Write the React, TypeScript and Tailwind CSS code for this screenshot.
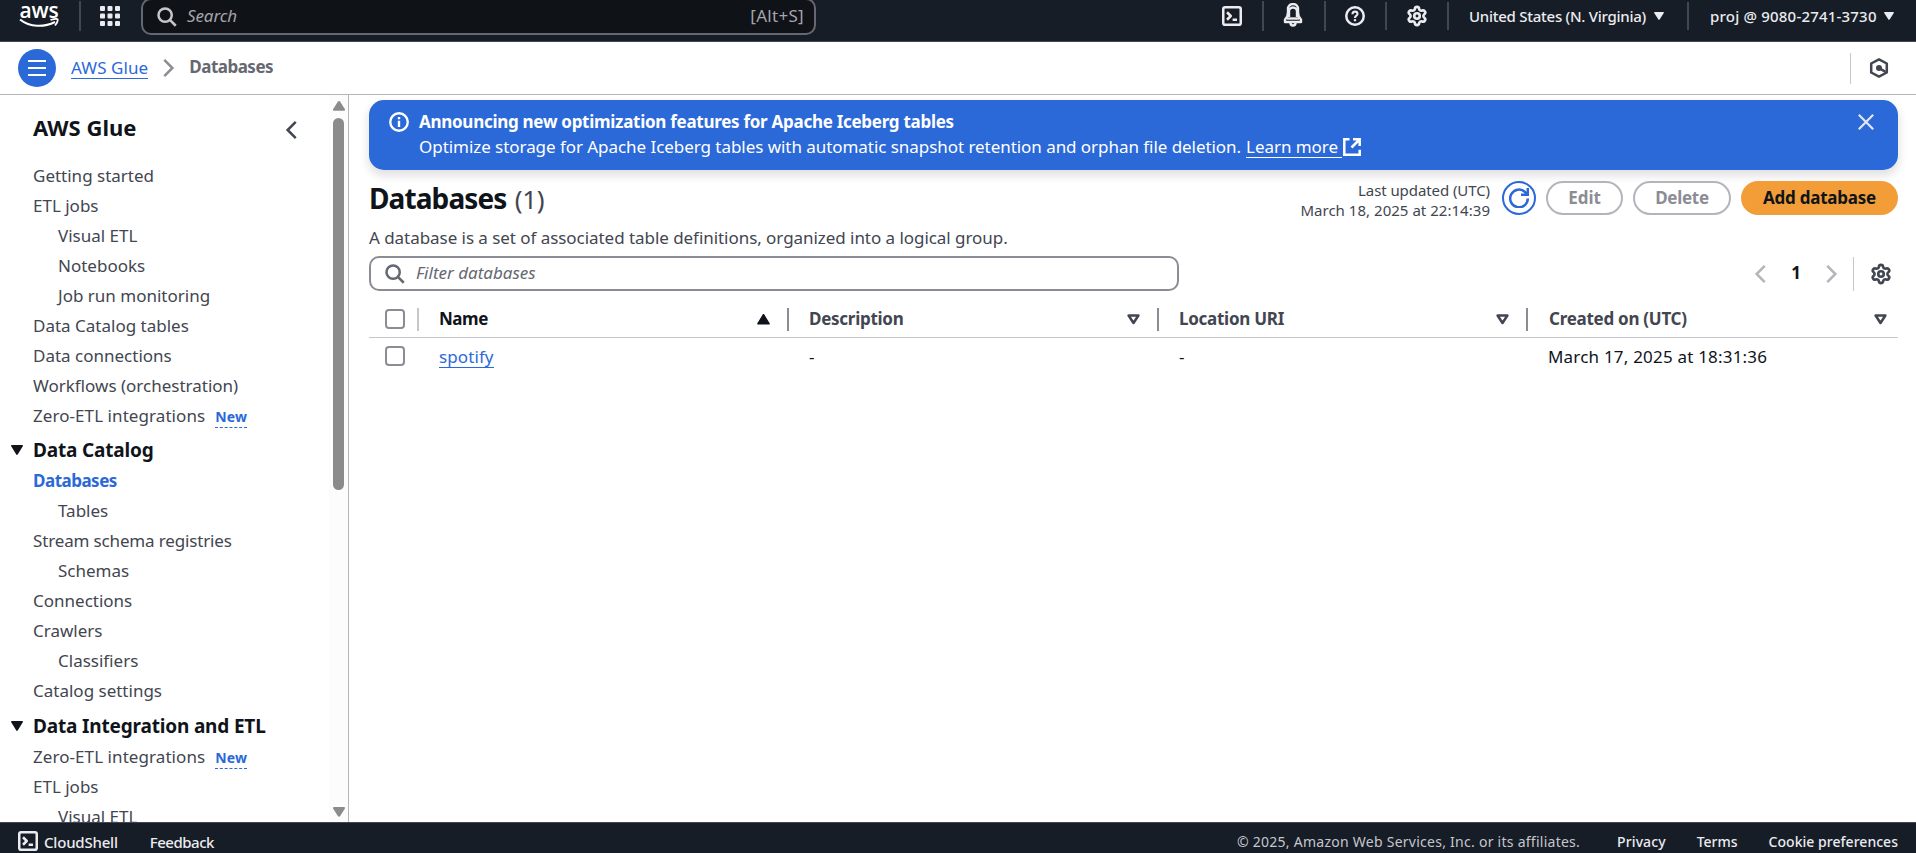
import type { ReactNode } from "react";
import { Settings } from "lucide-react";
import { clsx } from "clsx";

type NavItem = { label: string; nested?: boolean; active?: boolean; isNew?: boolean; tight?: boolean };

const topLinks: NavItem[] = [
  { label: "Getting started" },
  { label: "ETL jobs" },
  { label: "Visual ETL", nested: true },
  { label: "Notebooks", nested: true },
  { label: "Job run monitoring", nested: true },
  { label: "Data Catalog tables" },
  { label: "Data connections" },
  { label: "Workflows (orchestration)" },
  { label: "Zero-ETL integrations", isNew: true },
];

const catalogLinks: NavItem[] = [
  { label: "Databases", active: true },
  { label: "Tables", nested: true },
  { label: "Stream schema registries", tight: true },
  { label: "Schemas", nested: true },
  { label: "Connections" },
  { label: "Crawlers" },
  { label: "Classifiers", nested: true },
  { label: "Catalog settings" },
];

const integrationLinks: NavItem[] = [
  { label: "Zero-ETL integrations", isNew: true },
  { label: "ETL jobs" },
  { label: "Visual ETL", nested: true },
];

type IconProps = { className?: string; children: ReactNode };

function Icon({ className, children }: IconProps) {
  return (
    <svg
      viewBox="0 0 16 16"
      fill="none"
      stroke="currentColor"
      strokeWidth="2"
      strokeLinejoin="round"
      className={clsx("shrink-0", className)}
    >
      {children}
    </svg>
  );
}

function SearchIcon({ className }: { className: string }) {
  return (
    <Icon className={className}>
      <circle cx="6.500" cy="6.500" r="5.300" />
      <path d="m15 15-4.700-4.700" />
    </Icon>
  );
}

function CloudShellIcon() {
  return (
    <Icon className="size-5">
      <rect x="1" y="1" width="14" height="14" rx="1.5" />
      <path d="m4 5 3 3-3 3" />
      <path d="M8.5 11H12" />
    </Icon>
  );
}

function BellIcon() {
  return (
    <svg viewBox="0 0 20 24" fill="none" stroke="currentColor" strokeWidth="2.400" strokeLinejoin="round" className="h-6 w-5">
      <path d="M5 10V6a5 5 0 0 1 10 0v4" />
      <path d="M6 14V8.5a4 4 0 0 1 8 0V14" />
      <path d="M5 9.5C5 13 4 14.5 2 16.5V19h16v-2.500C16 14.500 15 13 15 9.500" />
      <path d="M4 15.500h12" />
      <path d="M7.500 19v1a2.500 2.500 0 0 0 5 0v-1" />
    </svg>
  );
}

function Caret() {
  return (
    <svg viewBox="0 0 10 8" className="h-2 w-2.5 shrink-0" fill="currentColor">
      <path d="M0.800 0h8.400c.6 0 .9.600.6 1L5.600 7.500c-.3.500-.9.500-1.200 0L.2 1C-.1.600.2 0 .800 0Z" />
    </svg>
  );
}

function NavLink({ item }: { item: NavItem }) {
  return (
    <li
      className={clsx(
        "flex h-[30px] shrink-0 items-center whitespace-nowrap",
        item.nested ? "pl-[58px]" : "pl-[33px]",
        item.active ? "font-bold tracking-[-0.5px] text-[#2b69d8]" : "text-[#424650]",
        item.tight && "tracking-[-0.15px]",
        item.isNew && "tracking-[0.07px]"
      )}
    >
      {item.label}
      {item.isNew && (
        <span className="mt-[3px] ml-2.5 border-b border-dashed border-[#2b69d8] text-sm leading-5 font-bold tracking-[0.2px] text-[#2b69d8]">
          New
        </span>
      )}
    </li>
  );
}

function NavHeading({ children }: { children: ReactNode }) {
  return (
    <h3 className="flex h-[30px] items-center gap-2.5 pl-[11px] text-[19px] font-bold tracking-[-0.17px] whitespace-nowrap text-[#0f141a]">
      <svg viewBox="0 0 12 10" className="h-2.5 w-3" fill="currentColor">
        <path d="M.8 0h10.400c.7 0 1 .6.6 1.200L6.700 9.500c-.3.600-1.100.600-1.400 0L.2 1.200C-.2.600.1 0 .8 0Z" />
      </svg>
      {children}
    </h3>
  );
}

function Sidebar() {
  return (
    <aside className="flex w-[349px] shrink-0 border-r border-[#b4b4bb]">
      <nav className="flex min-w-0 flex-1 flex-col overflow-hidden">
        <div className="flex h-[66px] shrink-0 items-center justify-between pr-[27px] pl-[33px]">
          <h2 className="-mt-0.5 text-[22px] font-bold text-[#0f141a]">AWS Glue</h2>
          <Icon className="mt-1 size-5 text-[#424650]">
            <path d="M11 1.500 4.500 8l6.500 6.500" strokeLinejoin="miter" />
          </Icon>
        </div>
        <ul>{topLinks.map((item) => <NavLink key={item.label} item={item} />)}</ul>
        <div className="mt-1">
          <NavHeading>Data Catalog</NavHeading>
          <ul className="mt-px">{catalogLinks.map((item) => <NavLink key={item.label} item={item} />)}</ul>
        </div>
        <div className="mt-[5px]">
          <NavHeading>Data Integration and ETL</NavHeading>
          <ul className="mt-px">{integrationLinks.map((item) => <NavLink key={item.label} item={item} />)}</ul>
        </div>
      </nav>
      <div className="flex w-[19px] flex-col items-center bg-[#fcfcfc] pt-[6px] pb-[5px]">
        <svg viewBox="0 0 12 10" className="h-2.5 w-3" fill="#8b8b8b">
          <path d="M6 0c.5 0 .8.200 1 .5L11.800 8c.4.700.1 1.800-1 1.800H1.200C.1 9.800-.2 8.700.2 8L5 .5C5.200.200 5.500 0 6 0Z" />
        </svg>
        <div className="mt-[7px] h-[372px] w-[11px] rounded-full bg-[#8b8b8b]" />
        <svg viewBox="0 0 12 10" className="mt-auto h-2.5 w-3" fill="#8b8b8b">
          <path d="M6 9.800c.5 0 .8-.2 1-.5L11.800 1.800C12.200 1.100 11.900 0 10.800 0H1.200C.1 0-.2 1.100.2 1.800L5 9.300c.2.300.5.500 1 .5Z" />
        </svg>
      </div>
    </aside>
  );
}

function Divider({ className }: { className: string }) {
  return <div className={clsx("w-0.5 shrink-0 bg-[#424650]", className)} />;
}

function TopBar() {
  return (
    <header className="flex h-[42px] shrink-0 items-start overflow-hidden border-b border-[#424650] bg-[#161d26] text-[15px] text-[#ebebf0]">
      <div className="flex w-20 flex-col items-center">
        <div className="h-[18px] pr-0.5 font-['Open_Sans'] text-[21px] leading-[20px] font-semibold tracking-[-0.1px] text-white">
          aws
        </div>
        <svg viewBox="0 0 40 11" className="mr-[2px] h-[11px] w-10" fill="none" stroke="#fff" strokeWidth="2">
          <path d="M1 1.500C11 9.500 25 9.500 36 4" />
          <path d="M31.500 2C35 .800 37.500.600 38.500 1.200 39 2.400 37.800 5.500 36 7.500" strokeWidth="1.800" />
        </svg>
      </div>
      <Divider className="mt-px -ml-px h-[30px]" />
      <svg viewBox="0 0 20 20" className="mt-1.5 ml-[19px] size-5" fill="currentColor">
        {[0, 7.500, 15].map((y) => [0, 7.500, 15].map((x) => <rect key={`${x}-${y}`} x={x} y={y} width="5" height="5" rx="1" />))}
      </svg>
      <div className="-mt-0.5 ml-[21px] flex h-[37px] w-[675px] items-center rounded-[10px] border-2 border-[#656871] bg-[#0f1217] pr-2.5 pl-3.5 text-[17px]">
        <SearchIcon className="size-5 text-[#c6c6cd]" />
        <span className="-mt-0.5 ml-2.5 tracking-[-0.1px] text-[#a4a4ad] italic">Search</span>
        <span className="-mt-0.5 ml-auto tracking-[0.3px] text-[#a4a4ad]">[Alt+S]</span>
      </div>
      <div className="mt-1.5 ml-[406px]">
        <CloudShellIcon />
      </div>
      <Divider className="mt-px ml-5 h-[30px]" />
      <div className="mt-[3px] ml-[19px]">
        <BellIcon />
      </div>
      <Divider className="mt-px ml-[21px] h-[30px]" />
      <Icon className="mt-1.5 ml-[19px] size-5">
        <circle cx="8" cy="8" r="7" />
        <path d="M6 6.500c0-1.100.9-2 2-2s2 .8 2 1.900c0 1.500-2 1.300-2 3.100" strokeWidth="1.700" />
        <path d="M8 10.500v1.700" strokeWidth="1.800" />
      </Icon>
      <Divider className="mt-0.5 ml-5 h-7" />
      <Settings className="mt-[5px] ml-[19px] size-[22px]" strokeWidth={2.900} />
      <Divider className="mt-0.5 ml-[19px] h-7" />
      <div className="mt-[5px] ml-5 flex h-[22px] items-center gap-2">
        <span className="font-medium tracking-[-0.26px]">United States (N. Virginia)</span>
        <Caret />
      </div>
      <Divider className="mt-0.5 ml-[23px] h-7" />
      <div className="mt-[5px] ml-[21px] flex h-[22px] items-center gap-[7px]">
        <span className="font-medium tracking-[0.2px]">proj @ 9080-2741-3730</span>
        <Caret />
      </div>
    </header>
  );
}

function BreadcrumbBar() {
  return (
    <div className="flex h-[53px] shrink-0 items-center border-b border-[#b4b4bb] pl-[18px]">
      <button className="flex size-[38px] items-center justify-center rounded-full bg-[#2b69d8] text-white">
        <svg viewBox="0 0 18 16" className="h-4 w-[18px]" fill="currentColor">
          <path d="M0 0h18v2H0zM0 7h18v2H0zM0 14h18v2H0z" />
        </svg>
      </button>
      <a className="ml-[15px] border-b border-[#2b69d8] leading-[20px] tracking-[0.08px] text-[#2b69d8]">AWS Glue</a>
      <Icon className="ml-2.5 size-5 text-[#8c8c94]">
        <path d="m5 1.500 6.500 6.500L5 14.500" strokeLinejoin="miter" />
      </Icon>
      <span className="-mt-0.5 ml-[11px] font-bold tracking-[-0.5px] text-[#656871]">Databases</span>
      <div className="ml-auto h-[31px] w-px bg-[#c6c6cd]" />
      <svg viewBox="0 0 20 20" className="mr-[27px] ml-[18px] size-5" fill="none" stroke="#424650" strokeWidth="2.500" strokeLinejoin="round">
        <path d="M10 1.400 17.800 5.500v9L10 18.600 2.200 14.500v-9Z" />
        <circle cx="10" cy="10" r="3" fill="#424650" stroke="none" />
        <path d="m10 10 6.500 3.800" />
      </svg>
    </div>
  );
}

function Banner() {
  return (
    <div className="flex h-[70px] shrink-0 rounded-[15px] bg-[#2b69d8] pt-3 text-white shadow-[0_5px_10px_1px_rgba(0,7,22,0.12)]">
      <Icon className="ml-5 size-5">
        <circle cx="8" cy="8" r="7" strokeWidth="1.900" />
        <path d="M8 7v5M8 4v1.700" strokeWidth="1.900" />
      </Icon>
      <div className="ml-2.5 leading-[25px]">
        <p className="-mt-[3px] font-bold tracking-[-0.28px]">Announcing new optimization features for Apache Iceberg tables</p>
        <p className="flex items-center tracking-[-0.05px]">
          Optimize storage for Apache Iceberg tables with automatic snapshot retention and orphan file deletion.
          <span className="ml-[5px] border-b border-white pr-1 leading-[21px]">Learn more</span>
          <svg viewBox="0 0 18 18" className="ml-px size-[18px]" fill="none" stroke="currentColor" strokeWidth="2.500">
            <path d="M6.500 1.300H1.300v15.400h15.400v-5" />
            <path d="M10 1.300h6.700V8M16.500 1.500 8.500 9.500" />
          </svg>
        </p>
      </div>
      <svg viewBox="0 0 16 16" className="mt-0.5 mr-6 ml-auto size-4" fill="none" stroke="#e4e6ee" strokeWidth="2.200">
        <path d="m.8.800 14.400 14.400M15.200.800.800 15.200" />
      </svg>
    </div>
  );
}

function Checkbox() {
  return <span className="size-5 rounded-[4px] border-2 border-[#8c8c94] bg-white" />;
}

function SortIcon({ active }: { active?: boolean }) {
  return active ? (
    <svg viewBox="0 0 13 11" className="h-[11px] w-[13px]" fill="#0f141a">
      <path d="M6.500 0c.4 0 .6.200.8.400l5.500 9c.3.600 0 1.200-.7 1.200H.9c-.7 0-1-.6-.7-1.200L5.700.4c.2-.2.400-.4.800-.4Z" />
    </svg>
  ) : (
    <svg viewBox="0 0 13 11" className="h-[11px] w-[13px]" fill="none" stroke="#424650" strokeWidth="2.500" strokeLinejoin="round">
      <path d="M1.600 1.500h9.800L6.500 9Z" />
    </svg>
  );
}

const columns = ["Name", "Description", "Location URI", "Created on (UTC)"];

function DatabaseTable() {
  return (
    <div className="mt-2.5 text-[#0f141a]">
      <div className="grid h-[37px] grid-cols-[50px_370px_370px_369px_1fr] items-center border-b border-[#c6c6cd] pb-px">
        <div className="flex items-center justify-between pl-4">
          <Checkbox />
          <span className="mt-px h-[23px] w-0.5 bg-[#c6c6cd]" />
        </div>
        {columns.map((name, index) => (
          <div key={name} className={clsx("flex items-center justify-between", index === 3 ? "pl-[21px]" : "pl-5")}>
            <span className={clsx("font-bold", index === 0 ? "tracking-[-0.45px] text-[#0f141a]" : "tracking-[-0.27px] text-[#424650]")}>
              {name}
            </span>
            <span className={clsx("mt-px flex items-center gap-[17px]", index === 3 && "pr-[11px]")}>
              <SortIcon active={index === 0} />
              {index < 3 && <span className="h-[23px] w-0.5 bg-[#8c8c94]" />}
            </span>
          </div>
        ))}
      </div>
      <div className="grid h-9 grid-cols-[50px_370px_370px_369px_1fr] items-center">
        <div className="flex pl-4">
          <Checkbox />
        </div>
        <div className="pt-px pl-5">
          <a className="inline-block border-b border-[#2b69d8] leading-5 tracking-[0.1px] text-[#2b69d8]">spotify</a>
        </div>
        <div className="pt-px pl-5">-</div>
        <div className="pt-px pl-5">-</div>
        <div className="pt-px pl-5 tracking-[0.2px]">March 17, 2025 at 18:31:36</div>
      </div>
    </div>
  );
}

function Databases() {
  return (
    <main className="flex min-w-0 flex-1 flex-col overflow-hidden pt-[5px] pr-[18px] pl-5">
      <Banner />
      <div className="mt-[11px] flex h-[41px] items-start">
        <h1 className="-mt-px text-[28px] leading-[36px] font-bold tracking-[-0.9px] text-[#0f141a]">
          Databases <span className="ml-0.5 text-[26px] font-normal tracking-[-0.3px] text-[#424650]">(1)</span>
        </h1>
        <div className="-mt-px mr-3 ml-auto text-right text-[15px] leading-5 tracking-[0.03px] text-[#424650]">
          <p className="tracking-[-0.08px]">Last updated (UTC)</p>
          <p>March 18, 2025 at 22:14:39</p>
        </div>
        <button className="flex size-[34px] items-center justify-center rounded-full border-2 border-[#2b69d8] text-[#2b69d8]">
          <svg viewBox="0 0 20 20" className="size-5 shrink-0" fill="none" stroke="currentColor" strokeWidth="2.500">
            <path d="M18.800 10.500A8.800 8.800 0 1 1 16 4l2.500 2.500" />
            <path d="M18.800 0v6.800H12" />
          </svg>
        </button>
        <button className="ml-2.5 h-[34px] w-[77px] rounded-full border-2 border-[#b4b4bb] font-bold tracking-[-0.1px] text-[#8c8c94]">
          Edit
        </button>
        <button className="ml-2.5 h-[34px] w-[98px] rounded-full border-2 border-[#b4b4bb] font-bold tracking-[-0.3px] text-[#8c8c94]">
          Delete
        </button>
        <button className="ml-2.5 h-[34px] w-[157px] rounded-full bg-[#f29d38] font-bold tracking-[-0.23px] text-[#0f141a]">
          Add database
        </button>
      </div>
      <p className="mt-1 leading-[24px] tracking-[-0.05px] text-[#424650]">
        A database is a set of associated table definitions, organized into a logical group.
      </p>
      <div className="mt-[6px] flex items-center">
        <div className="flex h-[35px] w-[810px] items-center rounded-[10px] border-2 border-[#8c8c94] pl-3.5">
          <SearchIcon className="size-5 text-[#656871]" />
          <span className="-mt-0.5 ml-[11px] text-[#656871] italic">Filter databases</span>
        </div>
        <Icon className="ml-auto size-5 text-[#b4b4bb]">
          <path d="M11 1.500 4.500 8l6.500 6.500" strokeLinejoin="miter" />
        </Icon>
        <span className="-mt-0.5 w-[50px] text-center font-bold text-[#0f141a]">1</span>
        <Icon className="size-5 text-[#b4b4bb]">
          <path d="m5 1.500 6.500 6.500L5 14.500" strokeLinejoin="miter" />
        </Icon>
        <div className="ml-3 h-[34px] w-px bg-[#c6c6cd]" />
        <Settings className="mr-1.5 ml-4 size-[22px] text-[#424650]" strokeWidth={2.900} />
      </div>
      <DatabaseTable />
    </main>
  );
}

function Footer() {
  return (
    <footer className="flex h-[31px] shrink-0 items-start overflow-hidden border-t border-[#424650] bg-[#161d26] pt-2 pr-[18px] pl-[18px] text-[15px] leading-[22px] font-medium text-[#ebebf0]">
      <CloudShellIcon />
      <span className="ml-1.5 tracking-[-0.2px]">CloudShell</span>
      <span className="ml-8 tracking-[-0.5px]">Feedback</span>
      <span className="ml-auto text-sm leading-[22px] font-normal tracking-[0.26px] text-[#c6c6cd]">
        © 2025, Amazon Web Services, Inc. or its affiliates.
      </span>
      <span className="ml-[37px] text-sm leading-[22px] tracking-[0.1px]">Privacy</span>
      <span className="ml-[31px] text-sm leading-[22px]">Terms</span>
      <span className="ml-[31px] text-sm leading-[22px] tracking-[0.03px]">Cookie preferences</span>
    </footer>
  );
}

export default function App() {
  return (
    <div className="flex h-screen flex-col overflow-hidden bg-white font-['Noto_Sans','Open_Sans',sans-serif] text-[17px]">
      <TopBar />
      <BreadcrumbBar />
      <div className="flex min-h-0 flex-1">
        <Sidebar />
        <Databases />
      </div>
      <Footer />
    </div>
  );
}
